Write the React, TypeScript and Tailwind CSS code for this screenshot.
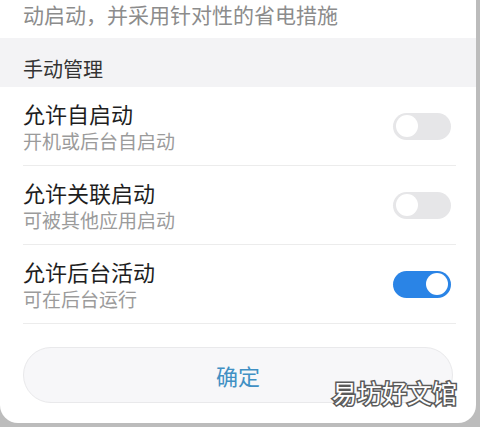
import React from "react";

const rows = [
  { title: "允许自启动", sub: "开机或后台自启动", on: false },
  { title: "允许关联启动", sub: "可被其他应用启动", on: false },
  { title: "允许后台活动", sub: "可在后台运行", on: true },
];

function Toggle({ on }: { on: boolean }) {
  return (
    <div
      className={
        on
          ? "flex h-[27px] w-[58px] items-center justify-end rounded-full bg-[#2a84e6] px-[3px]"
          : "flex h-[27px] w-[58px] items-center justify-start rounded-full bg-[#e6e6e8] px-[3px]"
      }
    >
      <div className="h-[22px] w-[22px] rounded-full bg-white" />
    </div>
  );
}

export default function App() {
  return (
    <div
      className="h-[427px] w-[480px] overflow-hidden bg-[#bcbcbc]"
      style={{ fontFamily: '"Noto Sans CJK SC", "Noto Sans", sans-serif' }}
    >
      <div className="relative h-[423px] w-[476px] rounded-b-[18px] bg-white">
        {/* tail of the description above */}
        <div className="h-[38px] pl-[23px] pt-[1px] text-[21px] leading-[26px] text-[#8c8c8c]">
          动启动，并采用针对性的省电措施
        </div>

        <div className="h-[49px] bg-[#f3f3f5] pl-[23px] pt-[17px] text-[20px] leading-[28px] text-[#333333]">
          手动管理
        </div>

        {rows.map((r) => (
          <div
            key={r.title}
            className="ml-[23px] mr-[20px] flex h-[79px] items-center justify-between border-b border-[#ececec]"
          >
            <div className="flex flex-col gap-[2px]">
              <span className="text-[22px] leading-[28px] text-[#1e1e1e]">{r.title}</span>
              <span className="text-[19px] leading-[24px] text-[#9b9b9b]">{r.sub}</span>
            </div>
            <div className="mr-[5px]">
              <Toggle on={r.on} />
            </div>
          </div>
        ))}

        <div className="mx-[23px] mt-[23px] flex h-[56px] items-center justify-center rounded-full border border-[#e9e9eb] bg-[#f7f7f9] text-[22px] text-[#4190c4]">
          确定
        </div>

        {/* watermark */}
        <div
          className="absolute left-[332px] top-[376px] text-[25px] leading-[32px] text-white"
          style={{ WebkitTextStroke: "3px #5a5a5a", paintOrder: "stroke fill" }}
        >
          易坊好文馆
        </div>
      </div>
    </div>
  );
}
